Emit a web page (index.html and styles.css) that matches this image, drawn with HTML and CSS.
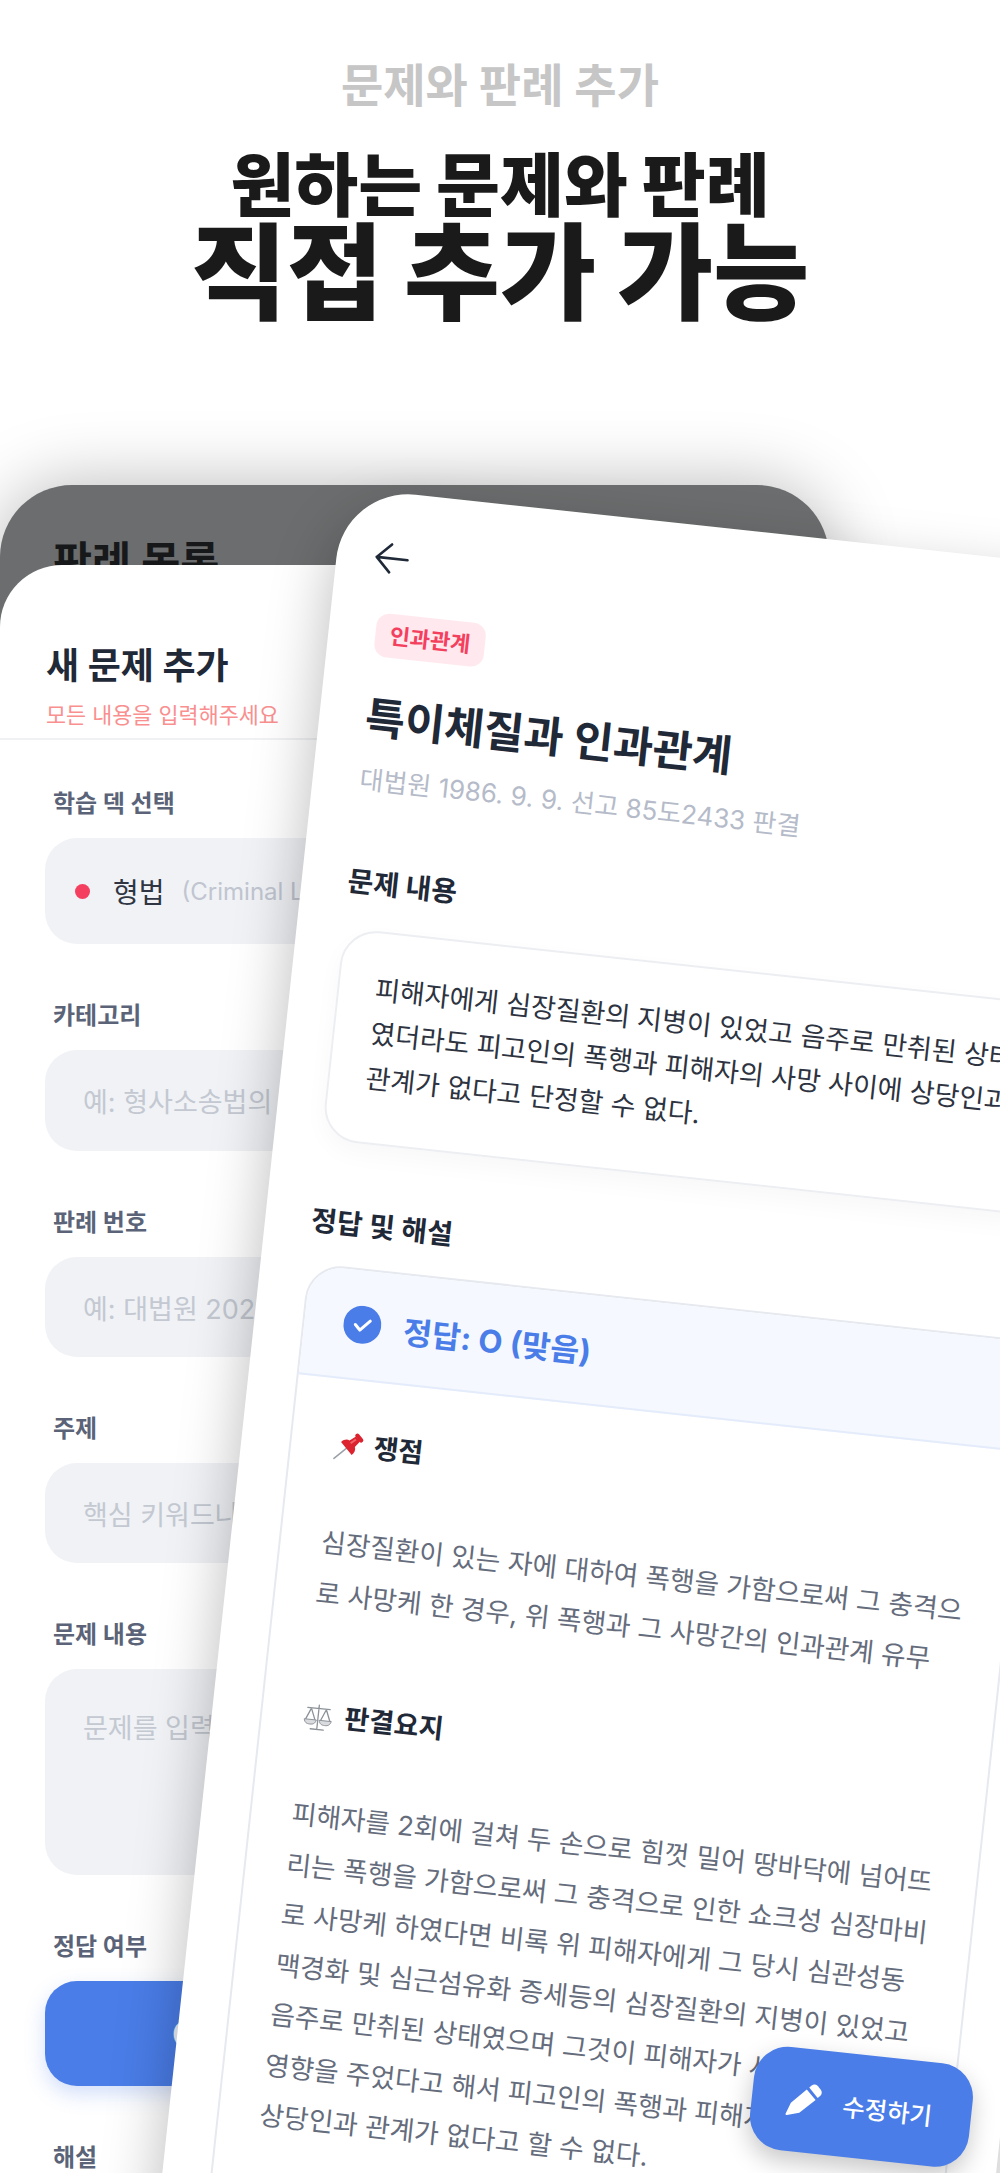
FILE: index.html
```html
<!DOCTYPE html>
<html lang="ko">
<head>
<meta charset="utf-8">
<title>문제와 판례 추가</title>
<link rel="stylesheet" href="styles.css">
</head>
<body>
<main class="stage">
  <header class="hero">
    <p class="hero-sub">문제와 판례 추가</p>
    <h1 class="hero-title"><span class="hero-line">원하는 문제와 판례</span><span class="hero-big">직접 추가 가능</span></h1>
  </header>

  <section class="screen-list">
    <h2 class="list-title">판례 목록</h2>
  </section>

  <section class="screen-form">
    <div class="form-head">
      <h2 class="form-title">새 문제 추가</h2>
      <p class="form-note">모든 내용을 입력해주세요</p>
    </div>
    <div class="form-body">
      <div class="label">학습 덱 선택</div>
      <div class="field field-select"><span class="dot"></span><span class="deck">형법</span><span class="deck-en">(Criminal Law)</span></div>
      <div class="label">카테고리</div>
      <div class="field field-a">예: 형사소송법의 기본원칙</div>
      <div class="label">판례 번호</div>
      <div class="field">예: 대법원 2023도1234</div>
      <div class="label">주제</div>
      <div class="field">핵심 키워드나 주제</div>
      <div class="label">문제 내용</div>
      <div class="field field-area">문제를 입력하세요</div>
      <div class="label">정답 여부</div>
      <div class="field field-true">O</div>
      <div class="label">해설</div>
    </div>
  </section>

  <article class="screen-detail">
    <svg class="back" viewBox="0 0 36 36" aria-hidden="true"><path d="M34 18H3M17 4 3 18l14 14"/></svg>
    <span class="badge">인과관계</span>
    <h2 class="detail-title">특이체질과 인과관계</h2>
    <p class="detail-sub">대법원 1986. 9. 9. 선고 85도2433 판결</p>

    <h3 class="section-title section-first">문제 내용</h3>
    <div class="question">피해자에게 심장질환의 지병이 있었고 음주로 만취된 상태<br>였더라도 피고인의 폭행과 피해자의 사망 사이에 상당인과<br>관계가 없다고 단정할 수 없다.</div>

    <h3 class="section-title section-second">정답 및 해설</h3>
    <div class="answer">
      <div class="answer-head">
        <svg class="check" viewBox="0 0 38 38" aria-hidden="true"><circle cx="19" cy="19" r="19"/><path d="m12 19.5 5 5 9.5-10"/></svg>
        <span class="answer-text">정답: O (맞음)</span>
      </div>
      <div class="answer-body">
        <h4 class="point"><svg class="emoji" viewBox="0 0 32 32" aria-hidden="true"><g transform="rotate(45 16 16)"><path class="pin-needle" d="M16 17v17"/><rect class="pin-red" x="10.5" y="-3" width="11" height="4.5" rx="2.2"/><path class="pin-red" d="M12.5 1h7l1 8c3 1 4.5 4 4.5 8H7c0-4 1.500-7 4.500-8z"/><path class="pin-shine" d="M14 3h2l-.5 7h-2z"/></g></svg>쟁점</h4>
        <p class="para">심장질환이 있는 자에 대하여 폭행을 가함으로써 그 충격으<br>로 사망케 한 경우, 위 폭행과 그 사망간의 인과관계 유무</p>
        <h4 class="point point-second"><svg class="emoji" viewBox="0 0 32 32" aria-hidden="true"><path class="scale-line" d="M16 2v25M4 5.500h24M9 28h14M8 6 3 18M8 6l5 12M24 6l-5 12M24 6l5 12"/><path class="scale-pan" d="M1.500 18h13c-1 4-3 5-6.500 5s-5.500-1-6.500-5zM17.500 18h13c-1 4-3 5-6.500 5s-5.500-1-6.500-5z"/></svg>판결요지</h4>
        <p class="para para-second">피해자를 2회에 걸쳐 두 손으로 힘껏 밀어 땅바닥에 넘어뜨<br>리는 폭행을 가함으로써 그 충격으로 인한 쇼크성 심장마비<br>로 사망케 하였다면 비록 위 피해자에게 그 당시 심관성동<br>맥경화 및 심근섬유화 증세등의 심장질환의 지병이 있었고<br>음주로 만취된 상태였으며 그것이 피해자가 사망에 이르는<br>영향을 주었다고 해서 피고인의 폭행과 피해자의 사망 간에<br>상당인과 관계가 없다고 할 수 없다.</p>
      </div>
    </div>

    <div class="fab">
      <svg class="pencil" viewBox="0 0 40 40" aria-hidden="true"><path d="M3 38c-1 .4-1.800-.4-1.500-1.500L6 24 22 7.500 33 18 16.500 34z"/><path d="m24.500 5 2.500-2.500a5 5 0 0 1 7 0l3.500 3.500a5 5 0 0 1 0 7L35 15.500z"/></svg>
      <span class="fab-text">수정하기</span>
    </div>
  </article>
</main>
</body>
</html>
```
FILE: styles.css
```css
* { box-sizing: border-box; margin: 0; padding: 0; }
html, body { width: 1000px; height: 2173px; background: #fff; overflow: hidden; }
body { font-family: Inter, "Noto Sans CJK KR", sans-serif; color: #1f2937; }
.stage { position: relative; width: 1000px; height: 2173px; overflow: hidden; background: #fff; }

.hero { padding-top: 55px; text-align: center; }
.hero-sub { font-size: 46px; line-height: 60px; font-weight: 700; color: #c6c6c6; margin-bottom: 31px; }
.hero-title { font-weight: 900; color: #1a1a1a; }
.hero-line { display: block; font-size: 69.5px; line-height: 80px; }
.hero-big { display: block; font-size: 104.5px; line-height: 94px; }

.screen-list {
  position: absolute; left: 0; top: 485px; width: 829px; height: 400px;
  background: #6b6d6e; border-radius: 72px 72px 0 0;
  padding: 53px 0 0 53px;
  box-shadow: 0 0 70px rgba(0, 0, 0, .28);
}
.list-title { font-size: 42.5px; line-height: 48px; font-weight: 700; color: #17181a; }

.screen-form {
  position: absolute; left: 0; top: 565px; width: 800px; height: 1640px;
  background: #fff; border-radius: 62px 62px 0 0;
}
.form-head { height: 175px; padding: 80px 0 0 46px; border-bottom: 2px solid #eff1f3; }
.form-title { font-size: 36px; line-height: 42px; font-weight: 700; color: #1f2937; }
.form-note { font-size: 21.8px; line-height: 30px; margin-top: 13px; color: #f98f8f; }
.form-body { padding: 47px 0 0 45px; }
.label { font-size: 24px; line-height: 34px; font-weight: 700; color: #5a6377; padding-left: 8px; margin-bottom: 17px; }
.field {
  width: 730px; height: 100px; margin-bottom: 55px; padding-left: 38px;
  display: flex; align-items: center;
  background: #f0f2f6; border-radius: 32px;
  font-size: 27px; color: #c3c8d1;
}
.field-select { height: 106px; padding-left: 30px; }
.field-a { height: 101px; }
.field-area { height: 206px; align-items: flex-start; padding-top: 38px; }
.field-true {
  height: 105px; padding-left: 127px; background: #4a7de8;
  color: #eef0fb; font-weight: 700; font-size: 36px;
  box-shadow: 0 8px 20px rgba(74, 125, 232, .25);
}
.dot { width: 15px; height: 15px; border-radius: 50%; background: #f43f5e; }
.deck { font-size: 28px; color: #2f3542; margin-left: 23px; }
.deck-en { font-size: 24px; color: #c0c5d0; margin-left: 17px; }

.screen-detail {
  position: absolute; left: 344px; top: 486.5px; width: 829px; height: 1900px;
  background: #fff; border-radius: 72px;
  padding: 48px 46px 0;
  transform: rotate(6.15deg); transform-origin: 0 0;
  box-shadow: 0 24px 60px rgba(0, 0, 0, .27);
}
.back { display: block; width: 36px; height: 36px; margin-left: -9px; fill: none; stroke: #1f2937; stroke-width: 2.6; stroke-linecap: round; stroke-linejoin: round; }
.badge {
  display: block; width: 110px; height: 44px; margin: 37px 0 0 1px;
  background: #ffe9ee; border-radius: 13px;
  font-size: 22px; line-height: 44px; text-align: center; font-weight: 700; color: #f43f5e;
}
.detail-title { font-size: 43.3px; line-height: 56px; font-weight: 700; color: #1f2937; margin-top: 33px; }
.detail-sub { font-size: 26px; line-height: 36px; color: #b5bbc9; margin: 17px 0 0 1px; white-space: nowrap; }
.section-title { font-size: 28px; line-height: 40px; font-weight: 700; color: #1f2937; }
.section-first { margin-top: 64px; }
.section-second { margin-top: 61px; }
.question {
  width: 733px; height: 213px; margin: 27px 0 0 1px; padding: 35px 0 0 36px;
  border: 2px solid #eceef2; border-radius: 36px;
  font-size: 27px; line-height: 44.4px; color: #2d3340; white-space: nowrap;
  box-shadow: 0 10px 24px rgba(30, 40, 60, .03);
}
.answer { width: 732.5px; margin: 23px 0 0 1.5px; border: 2px solid #e6e9ef; border-radius: 36px; overflow: hidden; }
.answer-head { height: 110px; padding-left: 39px; display: flex; align-items: center; background: #f5f8fe; border-bottom: 2px solid #e4ecfb; }
.check { width: 38px; height: 38px; flex: none; }
.check circle { fill: #4a7de8; }
.check path { fill: none; stroke: #fff; stroke-width: 3; stroke-linecap: round; stroke-linejoin: round; }
.answer-text { margin-left: 23px; font-size: 31.4px; font-weight: 700; color: #4a7de8; }
.answer-body { padding: 43px 0 100px 41px; }
.point { display: flex; align-items: center; height: 40px; font-size: 27px; font-weight: 700; color: #1f2937; }
.point-second { margin-top: 75px; }
.emoji { width: 30px; height: 30px; flex: none; margin: 10px 12px 0 0; overflow: visible; }
.pin-needle { stroke: #9aa0a8; stroke-width: 1.6; fill: none; stroke-linecap: round; }
.pin-red { fill: #dc2430; }
.pin-shine { fill: #f2636b; }
.scale-line { fill: none; stroke: #8d9299; stroke-width: 1.4; stroke-linecap: round; }
.scale-pan { fill: #d9dbde; stroke: #8d9299; stroke-width: 1; }
.para { font-size: 26.8px; line-height: 50.5px; color: #656c7c; margin-top: 56px; white-space: nowrap; }
.para-second { margin-top: 57px; }

.fab {
  position: absolute; left: 578px; top: 1503px; width: 220px; height: 104px;
  display: flex; align-items: center; padding-left: 34px;
  background: #4a7de8; border-radius: 34px;
  box-shadow: 0 10px 24px rgba(0, 0, 0, .22);
}
.pencil { width: 36px; height: 36px; fill: #fff; flex: none; }
.fab-text { margin-left: 21px; font-size: 24.5px; font-weight: 500; color: #fff; }
```
